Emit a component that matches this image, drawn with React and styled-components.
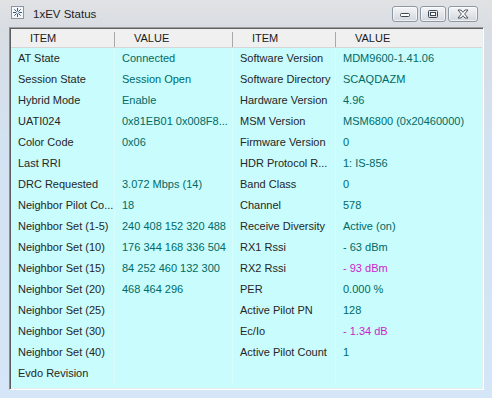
import { createGlobalStyle, styled } from "styled-components";

const GlobalStyle = createGlobalStyle`
  html, body {
    margin: 0;
    padding: 0;
    background: #d4e6f7;
  }
  body {
    font-family: "Liberation Sans", Arial, sans-serif;
  }
`;

const left = [
  ["AT State", "Connected"],
  ["Session State", "Session Open"],
  ["Hybrid Mode", "Enable"],
  ["UATI024", "0x81EB01 0x008F8..."],
  ["Color Code", "0x06"],
  ["Last RRI", ""],
  ["DRC Requested", "3.072 Mbps (14)"],
  ["Neighbor Pilot Co...", "18"],
  ["Neighbor Set (1-5)", "240 408 152 320 488"],
  ["Neighbor Set (10)", "176 344 168 336 504"],
  ["Neighbor Set (15)", "84 252 460 132 300"],
  ["Neighbor Set (20)", "468 464 296"],
  ["Neighbor Set (25)", ""],
  ["Neighbor Set (30)", ""],
  ["Neighbor Set (40)", ""],
  ["Evdo Revision", ""],
];

const right = [
  ["Software Version", "MDM9600-1.41.06"],
  ["Software Directory", "SCAQDAZM"],
  ["Hardware Version", "4.96"],
  ["MSM Version", "MSM6800 (0x20460000)"],
  ["Firmware Version", "0"],
  ["HDR Protocol R...", "1: IS-856"],
  ["Band Class", "0"],
  ["Channel", "578"],
  ["Receive Diversity", "Active (on)"],
  ["RX1 Rssi", "- 63 dBm"],
  ["RX2 Rssi", "- 93 dBm", true],
  ["PER", "0.000 %"],
  ["Active Pilot PN", "128"],
  ["Ec/Io", "- 1.34 dB", true],
  ["Active Pilot Count", "1"],
  ["", ""],
];

const AppIcon = () => (
  <svg width="13" height="13" viewBox="0 0 13 13">
    <rect x="0.5" y="0.5" width="12" height="12" fill="#f4f6f8" stroke="#8a96a4" />
    <g stroke="#3a5a7a" strokeWidth="1">
      <line x1="6.5" y1="2" x2="6.5" y2="11" />
      <line x1="2" y1="6.5" x2="11" y2="6.5" />
      <line x1="3.3" y1="3.3" x2="9.7" y2="9.7" />
      <line x1="9.7" y1="3.3" x2="3.3" y2="9.7" />
    </g>
    <circle cx="6.5" cy="6.5" r="1.3" fill="#ffffff" />
  </svg>
);

const MinIcon = () => (
  <svg width="12" height="8" viewBox="0 0 12 8">
    <rect x="1.5" y="3.5" width="9" height="3" rx="1" fill="#fff" stroke="#3c4650" />
  </svg>
);

const MaxIcon = () => (
  <svg width="12" height="10" viewBox="0 0 12 10">
    <rect x="1.5" y="1.5" width="9" height="7" rx="1" fill="none" stroke="#3c4650" />
    <rect x="3.5" y="3.5" width="5" height="3" fill="#fff" stroke="#3c4650" />
  </svg>
);

const CloseIcon = () => (
  <svg width="14" height="10" viewBox="0 0 14 10">
    <path
      d="M2 1 H5 L7 3.3 L9 1 H12 L8.6 5 L12 9 H9 L7 6.7 L5 9 H2 L5.4 5 Z"
      fill="#fff"
      stroke="#3c4650"
      strokeWidth="0.9"
      strokeLinejoin="round"
    />
  </svg>
);

const App = () => {
  return (
    <>
      <GlobalStyle />
      <Window>
        <TitleBar>
          <AppIcon />
          <Title>1xEV Status</Title>
          <Buttons>
            <CaptionButton $w={26}>
              <MinIcon />
            </CaptionButton>
            <CaptionButton $w={26}>
              <MaxIcon />
            </CaptionButton>
            <CaptionButton $w={30}>
              <CloseIcon />
            </CaptionButton>
          </Buttons>
        </TitleBar>
        <ListBox>
          <HeaderRow>
            <HeadCell>ITEM</HeadCell>
            <HeadCell>VALUE</HeadCell>
            <HeadCell>ITEM</HeadCell>
            <HeadCell $last>VALUE</HeadCell>
          </HeaderRow>
          <Body>
            {left.map((l, i) => {
              const r = right[i];
              return (
                <Row key={i}>
                  <Cell>{l[0]}</Cell>
                  <Cell $value>{l[1]}</Cell>
                  <Cell>{r[0]}</Cell>
                  <Cell $value $alert={r[2]} $last>
                    {r[1]}
                  </Cell>
                </Row>
              );
            })}
          </Body>
        </ListBox>
      </Window>
    </>
  );
};

const Window = styled.div`
  width: 492px;
  height: 398px;
  display: flex;
  flex-direction: column;
  background: linear-gradient(#e1e2e4 0px, #d8dde3 30px, #d3e2f1 140px, #d4e6f7 100%);
  box-sizing: border-box;
`;

const TitleBar = styled.div`
  height: 27px;
  display: flex;
  align-items: center;
  padding: 0 14px 2px 11px;
  box-sizing: border-box;
  gap: 9px;
`;

const Title = styled.span`
  font-family: "Liberation Sans", Arial, sans-serif;
  font-size: 11.5px;
  color: #1e1e1e;
  flex: 1;
  margin-top: 3px;
`;

const Buttons = styled.div`
  display: flex;
  gap: 2px;
  align-self: flex-start;
  margin-top: 6px;
`;

const CaptionButton = styled.div`
  width: ${(p) => p.$w}px;
  height: 16px;
  box-sizing: border-box;
  border: 1px solid #8e98a3;
  border-radius: 3px;
  background: linear-gradient(#f5f6f8, #e3e6ea 50%, #d3d8de);
  box-shadow: inset 0 0 0 1px rgba(255, 255, 255, 0.6);
  display: flex;
  align-items: center;
  justify-content: center;
`;

const ListBox = styled.div`
  margin: 0 8px 0 9px;
  height: 363px;
  box-sizing: border-box;
  border-top: 1px solid #a0a0a0;
  border-left: 1px solid #8c8c8c;
  border-right: 1px solid #ffffff;
  border-bottom: 1px solid #ffffff;
  background: #c9fcfc;
  display: flex;
  flex-direction: column;
  box-shadow: inset 1px 1px 0 #5e5e5e, inset -1px -1px 0 #e6eef0;
  padding: 1px;
`;

const HeaderRow = styled.div`
  display: grid;
  grid-template-columns: 104px 118px 103px 1fr;
  height: 18px;
  background: #f0f0f0;
  border-bottom: 1px solid #d6d6d6;
`;

const HeadCell = styled.div`
  font-size: 11px;
  color: #1a1a1a;
  padding-left: 19px;
  line-height: 19px;
  position: relative;
  &::after {
    content: "";
    display: ${(p) => (p.$last ? "none" : "block")};
    position: absolute;
    right: 0;
    top: 3px;
    bottom: 1px;
    width: 1px;
    background: #a8a8a8;
  }
`;

const Body = styled.div`
  display: flex;
  flex-direction: column;
`;

const Row = styled.div`
  display: grid;
  grid-template-columns: 104px 118px 103px 1fr;
  height: 21px;
`;

const Cell = styled.div`
  font-size: 11px;
  line-height: 21px;
  padding-left: 7px;
  white-space: nowrap;
  overflow: hidden;
  color: ${(p) => (p.$alert ? "#cc1ecc" : p.$value ? "#006a66" : "#262626")};
  border-right: ${(p) => (p.$last ? "none" : "1px solid rgba(255, 255, 255, 0.3)")};
`;

export default App;
